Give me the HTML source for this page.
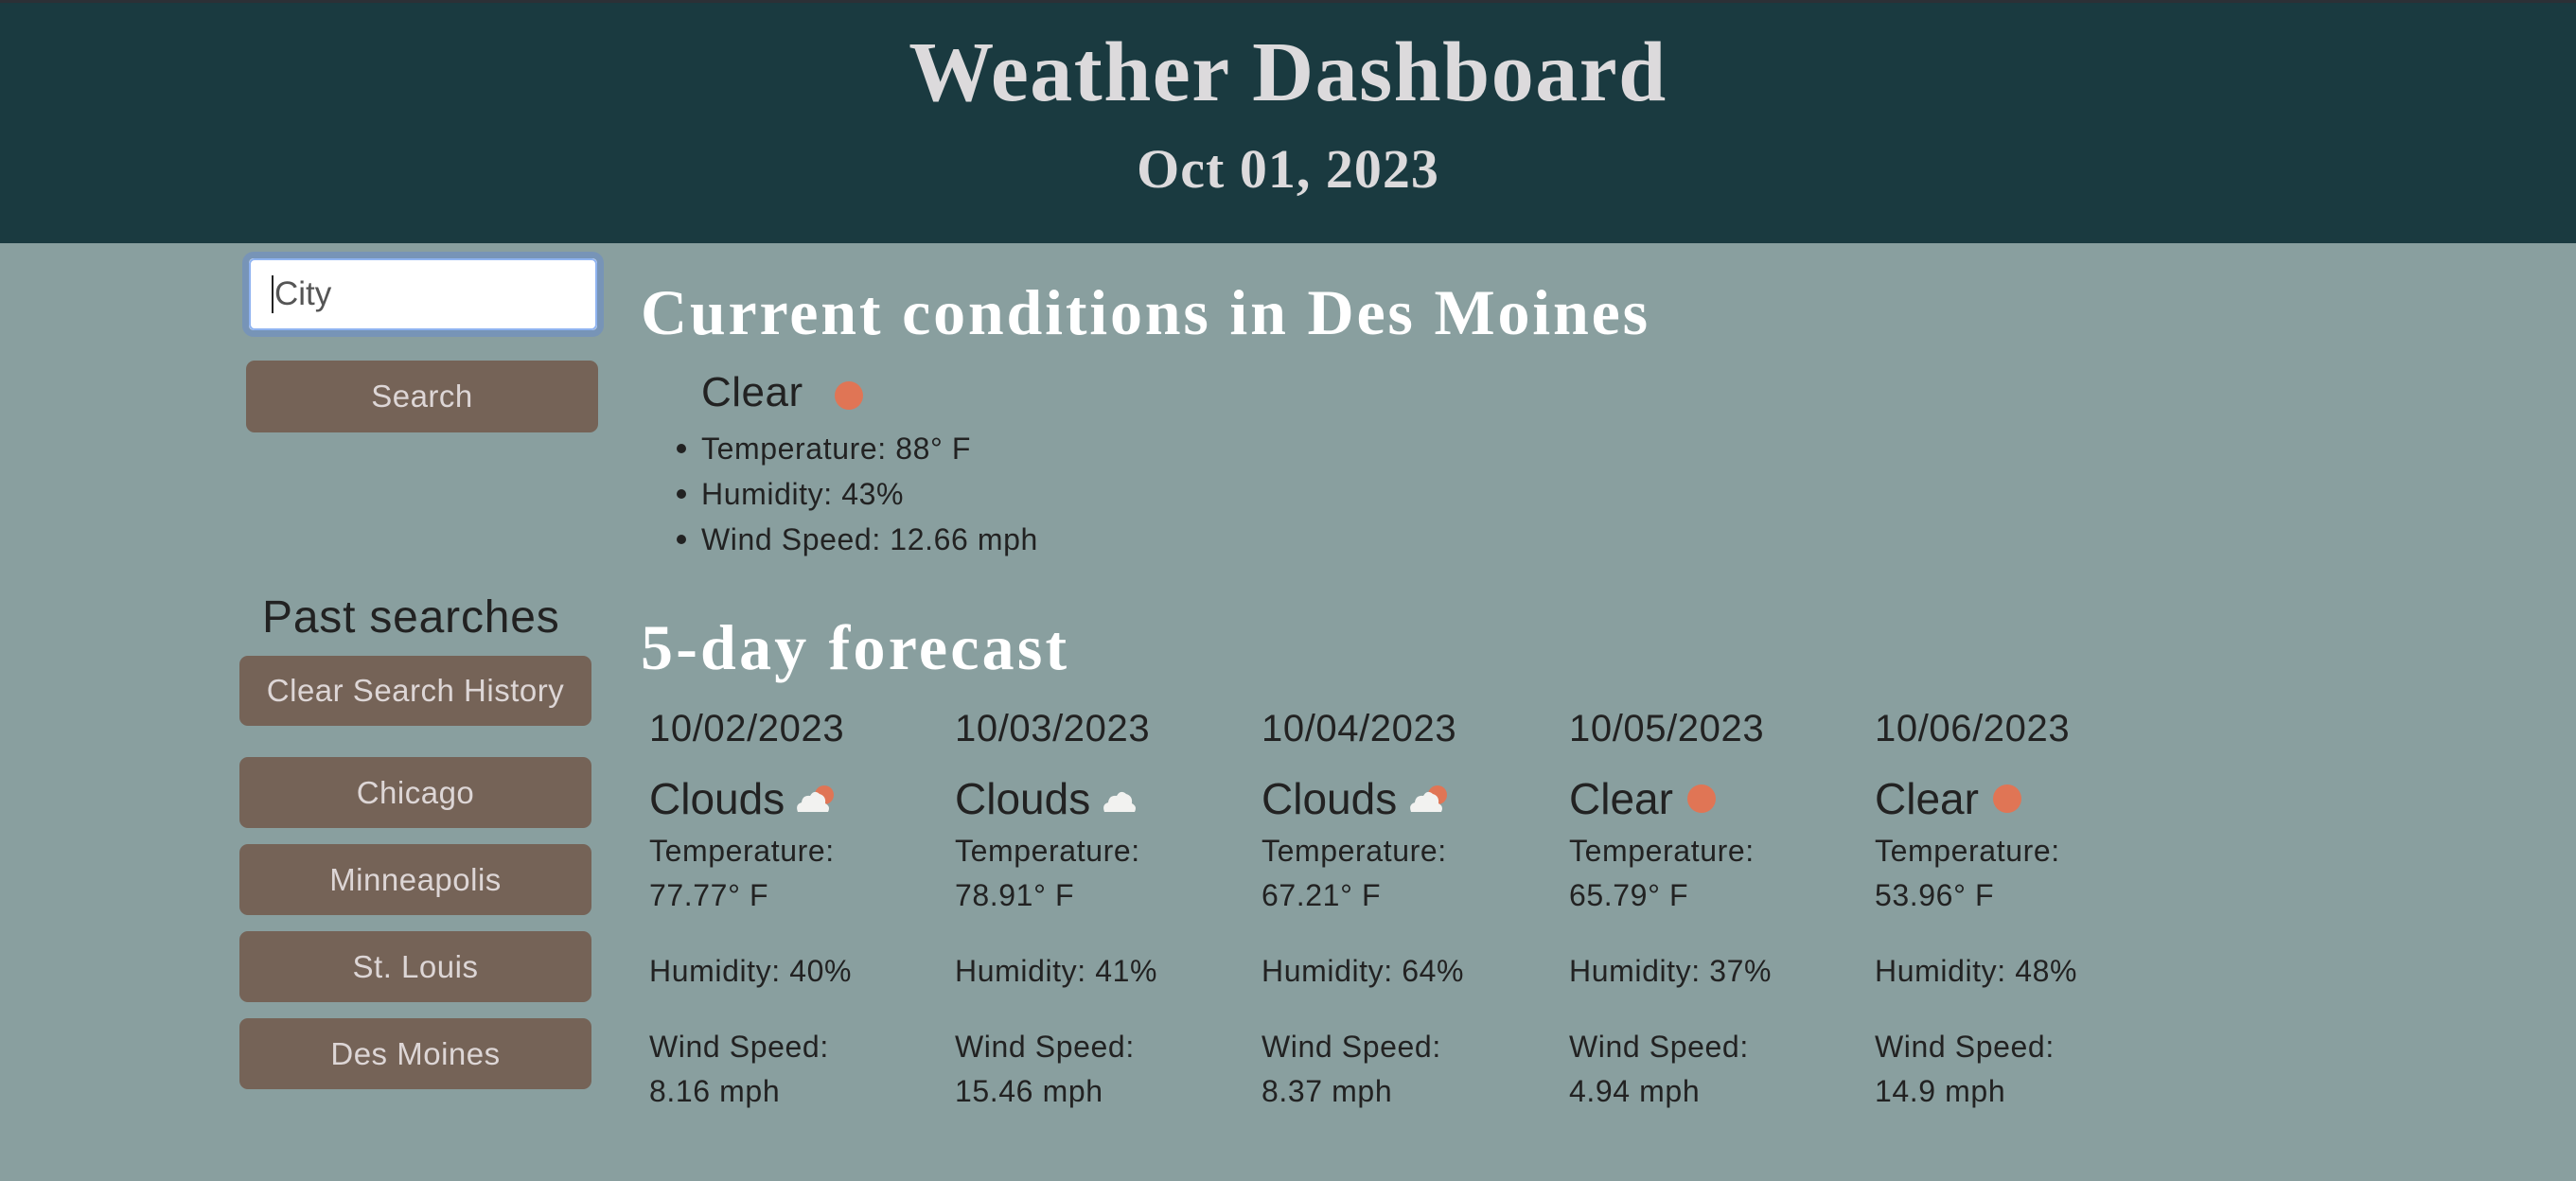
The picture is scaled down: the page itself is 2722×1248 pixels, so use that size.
<!DOCTYPE html>
<html><head><meta charset="utf-8"><style>
*{margin:0;padding:0;box-sizing:border-box}
body{width:2722px;height:1248px;background:#899f9f;font-family:"Liberation Sans",sans-serif;color:#222;position:relative;overflow:hidden}
.hdr{position:absolute;left:0;top:0;width:2722px;height:257px;background:#1a3a40;border-top:3px solid #2c3036}
.t{position:absolute;width:100%;text-align:center;color:#dcdadc;font-family:"Liberation Serif",serif;font-weight:bold}
.a{position:absolute;white-space:nowrap}
.btn{position:absolute;background:#756357;border-radius:9px;color:#ddd6d6;text-align:center;font-size:33px;letter-spacing:0.5px}
.h{font-family:"Liberation Serif",serif;font-weight:bold;color:#fff;font-size:68px;letter-spacing:2.8px}
.f{font-size:32px;letter-spacing:0.6px}
</style></head><body>
<div class="hdr">
<div class="t" style="top:22px;font-size:90px;letter-spacing:1.5px">Weather Dashboard</div>
<div class="t" style="top:142px;font-size:58px;letter-spacing:1px">Oct 01, 2023</div>
</div>
<div class="a" style="left:256px;top:266px;width:382px;height:90px;border:7px solid #7794b7;border-radius:12px;background:#fff;">
<div style="position:absolute;inset:0;border:2px solid #8fb3f0;border-radius:6px"></div>
<div style="position:absolute;left:24px;top:18px;font-size:35px;color:#555;border-left:2px solid #222;padding-left:1px;line-height:40px">City</div>
</div>
<div class="btn" style="left:260px;top:381px;width:372px;height:76px;line-height:76px">Search</div>
<div class="a h" style="left:677px;top:291px">Current conditions in Des Moines</div>
<div class="a" style="left:741px;top:390px;font-size:44px;letter-spacing:0.5px">Clear</div>
<svg class="a" style="left:880px;top:401px" width="34" height="34"><circle cx="17" cy="17" r="15" fill="#e07555"/></svg>
<div class="a f" style="left:741px;top:450px;line-height:48px">
<div>Temperature: 88° F</div><div>Humidity: 43%</div><div>Wind Speed: 12.66 mph</div></div>
<svg class="a" style="left:710px;top:450px" width="20" height="150"><circle cx="10" cy="24" r="5" fill="#222"/><circle cx="10" cy="72" r="5" fill="#222"/><circle cx="10" cy="120" r="5" fill="#222"/></svg>
<div class="a" style="left:277px;top:625px;font-size:48px;letter-spacing:0.8px">Past searches</div>
<div class="btn" style="left:253px;top:693px;width:372px;height:74px;line-height:74px">Clear Search History</div>
<div class="btn" style="left:253px;top:800px;width:372px;height:75px;line-height:75px">Chicago</div>
<div class="btn" style="left:253px;top:892px;width:372px;height:75px;line-height:75px">Minneapolis</div>
<div class="btn" style="left:253px;top:984px;width:372px;height:75px;line-height:75px">St. Louis</div>
<div class="btn" style="left:253px;top:1076px;width:372px;height:75px;line-height:75px">Des Moines</div>
<div class="a h" style="left:677px;top:645px;letter-spacing:3.2px">5-day forecast</div>

<div class="a" style="left:686px;top:748px;font-size:40px;letter-spacing:0.6px">10/02/2023</div>
<div class="a" style="left:1009px;top:748px;font-size:40px;letter-spacing:0.6px">10/03/2023</div>
<div class="a" style="left:1333px;top:748px;font-size:40px;letter-spacing:0.6px">10/04/2023</div>
<div class="a" style="left:1658px;top:748px;font-size:40px;letter-spacing:0.6px">10/05/2023</div>
<div class="a" style="left:1981px;top:748px;font-size:40px;letter-spacing:0.6px">10/06/2023</div>

<div class="a" style="left:686px;top:817px;font-size:46px">Clouds</div>
<div class="a" style="left:1009px;top:817px;font-size:46px">Clouds</div>
<div class="a" style="left:1333px;top:817px;font-size:46px">Clouds</div>
<div class="a" style="left:1658px;top:817px;font-size:46px">Clear</div>
<div class="a" style="left:1981px;top:817px;font-size:46px">Clear</div>

<svg class="a" style="left:840px;top:826px" width="44" height="34"><circle cx="31" cy="14" r="10" fill="#e07555"/><path d="M3 32 Q0 24 7 22 Q8 14 16 15 Q20 8 26 13 Q33 15 32 23 Q38 26 35 32 Z" fill="#f2f2f0"/></svg>
<svg class="a" style="left:1164px;top:826px" width="44" height="34"><path d="M3 32 Q0 24 7 22 Q8 14 16 15 Q20 8 26 13 Q33 15 32 23 Q38 26 35 32 Z" fill="#f2f2f0"/></svg>
<svg class="a" style="left:1488px;top:826px" width="44" height="34"><circle cx="31" cy="14" r="10" fill="#e07555"/><path d="M3 32 Q0 24 7 22 Q8 14 16 15 Q20 8 26 13 Q33 15 32 23 Q38 26 35 32 Z" fill="#f2f2f0"/></svg>
<svg class="a" style="left:1781px;top:827px" width="34" height="34"><circle cx="17" cy="17" r="15" fill="#e07555"/></svg>
<svg class="a" style="left:2104px;top:827px" width="34" height="34"><circle cx="17" cy="17" r="15" fill="#e07555"/></svg>

<div class="a f" style="left:686px;top:876px;line-height:47px">Temperature:<br>77.77° F<br><div style="height:33px"></div>Humidity: 40%<br><div style="height:33px"></div>Wind Speed:<br>8.16 mph</div>
<div class="a f" style="left:1009px;top:876px;line-height:47px">Temperature:<br>78.91° F<br><div style="height:33px"></div>Humidity: 41%<br><div style="height:33px"></div>Wind Speed:<br>15.46 mph</div>
<div class="a f" style="left:1333px;top:876px;line-height:47px">Temperature:<br>67.21° F<br><div style="height:33px"></div>Humidity: 64%<br><div style="height:33px"></div>Wind Speed:<br>8.37 mph</div>
<div class="a f" style="left:1658px;top:876px;line-height:47px">Temperature:<br>65.79° F<br><div style="height:33px"></div>Humidity: 37%<br><div style="height:33px"></div>Wind Speed:<br>4.94 mph</div>
<div class="a f" style="left:1981px;top:876px;line-height:47px">Temperature:<br>53.96° F<br><div style="height:33px"></div>Humidity: 48%<br><div style="height:33px"></div>Wind Speed:<br>14.9 mph</div>
</body></html>
